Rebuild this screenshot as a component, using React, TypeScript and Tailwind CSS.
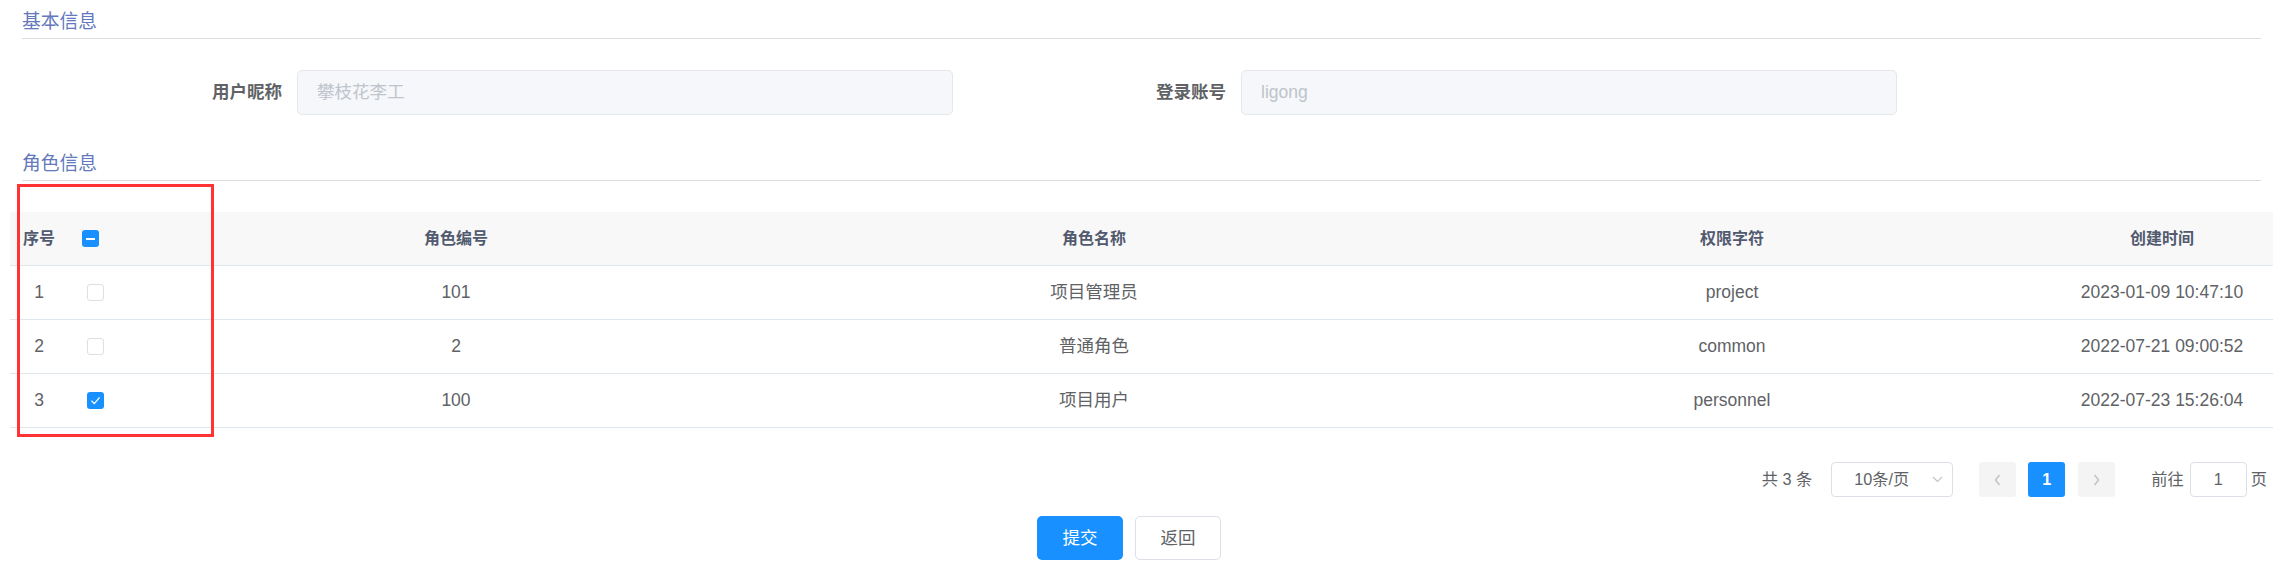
import React from "react"

const roles = [
  { id: 1, code: "101", name: "项目管理员", key: "project", time: "2023-01-09 10:47:10", checked: false },
  { id: 2, code: "2", name: "普通角色", key: "common", time: "2022-07-21 09:00:52", checked: false },
  { id: 3, code: "100", name: "项目用户", key: "personnel", time: "2022-07-23 15:26:04", checked: true },
]

const cols = "grid grid-cols-[58px_69px_638px_638px_638px_1fr]"

function SectionTitle({ children, className = "" }: { children: React.ReactNode; className?: string }) {
  return (
    <div
      className={`mx-[12px] pt-[11px] pb-[6px] border-b border-[#dddddd] text-[18.75px] leading-[21px] text-[#6379bb] ${className}`}
    >
      {children}
    </div>
  )
}

function Checkbox({ state }: { state: "off" | "on" | "half" }) {
  if (state === "off") {
    return <span className="block w-[17px] h-[17px] rounded-[3px] border border-[#dcdfe6] bg-white" />
  }
  return (
    <span className="flex items-center justify-center w-[17px] h-[17px] rounded-[3px] bg-[#1890ff]">
      {state === "half" ? (
        <span className="block w-[9px] h-[2px] bg-white" />
      ) : (
        <svg width="13" height="13" viewBox="0 0 13 13" fill="none">
          <path d="M2.5 6.8 L5.3 9.6 L10.6 3.4" stroke="white" strokeWidth="1.3" />
        </svg>
      )}
    </span>
  )
}

function Chevron({ dir }: { dir: "left" | "right" }) {
  return (
    <svg width="9" height="14" viewBox="0 0 9 14" fill="none">
      <path
        d={dir === "left" ? "M6.5 2 L2.5 7 L6.5 12" : "M2.5 2 L6.5 7 L2.5 12"}
        stroke="#c0c4cc"
        strokeWidth="1.6"
      />
    </svg>
  )
}

export default function App() {
  return (
    <div className="relative w-[2285px] h-[576px] bg-white pl-[10px] pr-[12px] font-['Liberation_Sans','Noto_Sans_CJK_SC',sans-serif] text-[#606266]">
      <SectionTitle>基本信息</SectionTitle>

      {/* form row */}
      <div className="mt-[31px] flex pl-[162px] text-[17.5px]">
        <div className="flex items-center">
          <label className="w-[125px] pr-[15px] text-right font-bold text-[#606266]">用户昵称</label>
          <div className="w-[656px] h-[45px] flex items-center px-[19px] rounded-[5px] border border-[#e4e7ed] bg-[#f5f7fa] text-[#c0c4cc]">
            攀枝花李工
          </div>
        </div>
        <div className="flex items-center ml-[163px]">
          <label className="w-[125px] pr-[15px] text-right font-bold text-[#606266]">登录账号</label>
          <div className="w-[656px] h-[45px] flex items-center px-[19px] rounded-[5px] border border-[#e4e7ed] bg-[#f5f7fa] text-[#c0c4cc]">
            ligong
          </div>
        </div>
      </div>

      <SectionTitle className="mt-[27px]">角色信息</SectionTitle>

      {/* table */}
      <div className="mt-[31px]">
        <div className={`${cols} h-[54px] bg-[#f8f8f9] border-b border-[#dfe6ec] text-[16px] font-bold text-[#515a6e] items-center`}>
          <div className="text-center">序号</div>
          <div className="pl-[14px]">
            <Checkbox state="half" />
          </div>
          <div className="text-center">角色编号</div>
          <div className="text-center">角色名称</div>
          <div className="text-center">权限字符</div>
          <div className="text-center">创建时间</div>
        </div>
        {roles.map((r) => (
          <div key={r.id} className={`${cols} h-[54px] border-b border-[#dfe6ec] text-[17.5px] items-center`}>
            <div className="text-center">{r.id}</div>
            <div className="pl-[19px]">
              <Checkbox state={r.checked ? "on" : "off"} />
            </div>
            <div className="text-center">{r.code}</div>
            <div className="text-center">{r.name}</div>
            <div className="text-center">{r.key}</div>
            <div className="text-center">{r.time}</div>
          </div>
        ))}
      </div>

      {/* pagination */}
      <div className="mt-[34px] flex justify-end items-center pr-[6px] h-[35px] text-[16.25px]">
        <span>共 3 条</span>
        <div className="ml-[19px] w-[122px] h-[35px] flex items-center justify-between pl-[22px] pr-[9px] rounded-[4px] border border-[#dcdfe6]">
          <span>10条/页</span>
          <svg width="11" height="7" viewBox="0 0 11 7" fill="none">
            <path d="M1 1 L5.5 5.5 L10 1" stroke="#c0c4cc" strokeWidth="1.2" />
          </svg>
        </div>
        <div className="ml-[26px] w-[37px] h-[35px] flex items-center justify-center rounded-[3px] bg-[#f4f4f5]">
          <Chevron dir="left" />
        </div>
        <div className="ml-[12px] w-[37px] h-[35px] flex items-center justify-center rounded-[3px] bg-[#1890ff] text-white font-bold">
          1
        </div>
        <div className="ml-[13px] w-[37px] h-[35px] flex items-center justify-center rounded-[3px] bg-[#f4f4f5]">
          <Chevron dir="right" />
        </div>
        <span className="ml-[36px]">前往</span>
        <div className="ml-[6px] w-[57px] h-[35px] flex items-center justify-center rounded-[4px] border border-[#dcdfe6]">
          1
        </div>
        <span className="ml-[4px]">页</span>
      </div>

      {/* buttons */}
      <div className="mt-[19px] flex justify-center pr-[25px] text-[17.5px]">
        <button className="w-[86px] h-[44px] rounded-[5px] bg-[#1890ff] text-white">提交</button>
        <button className="ml-[12px] w-[86px] h-[44px] rounded-[5px] border border-[#dcdfe6] bg-white text-[#606266]">
          返回
        </button>
      </div>

      {/* annotation */}
      <div className="absolute left-[17px] top-[184px] w-[197px] h-[253px] border-[3px] border-[#ff3333]" />
    </div>
  )
}
